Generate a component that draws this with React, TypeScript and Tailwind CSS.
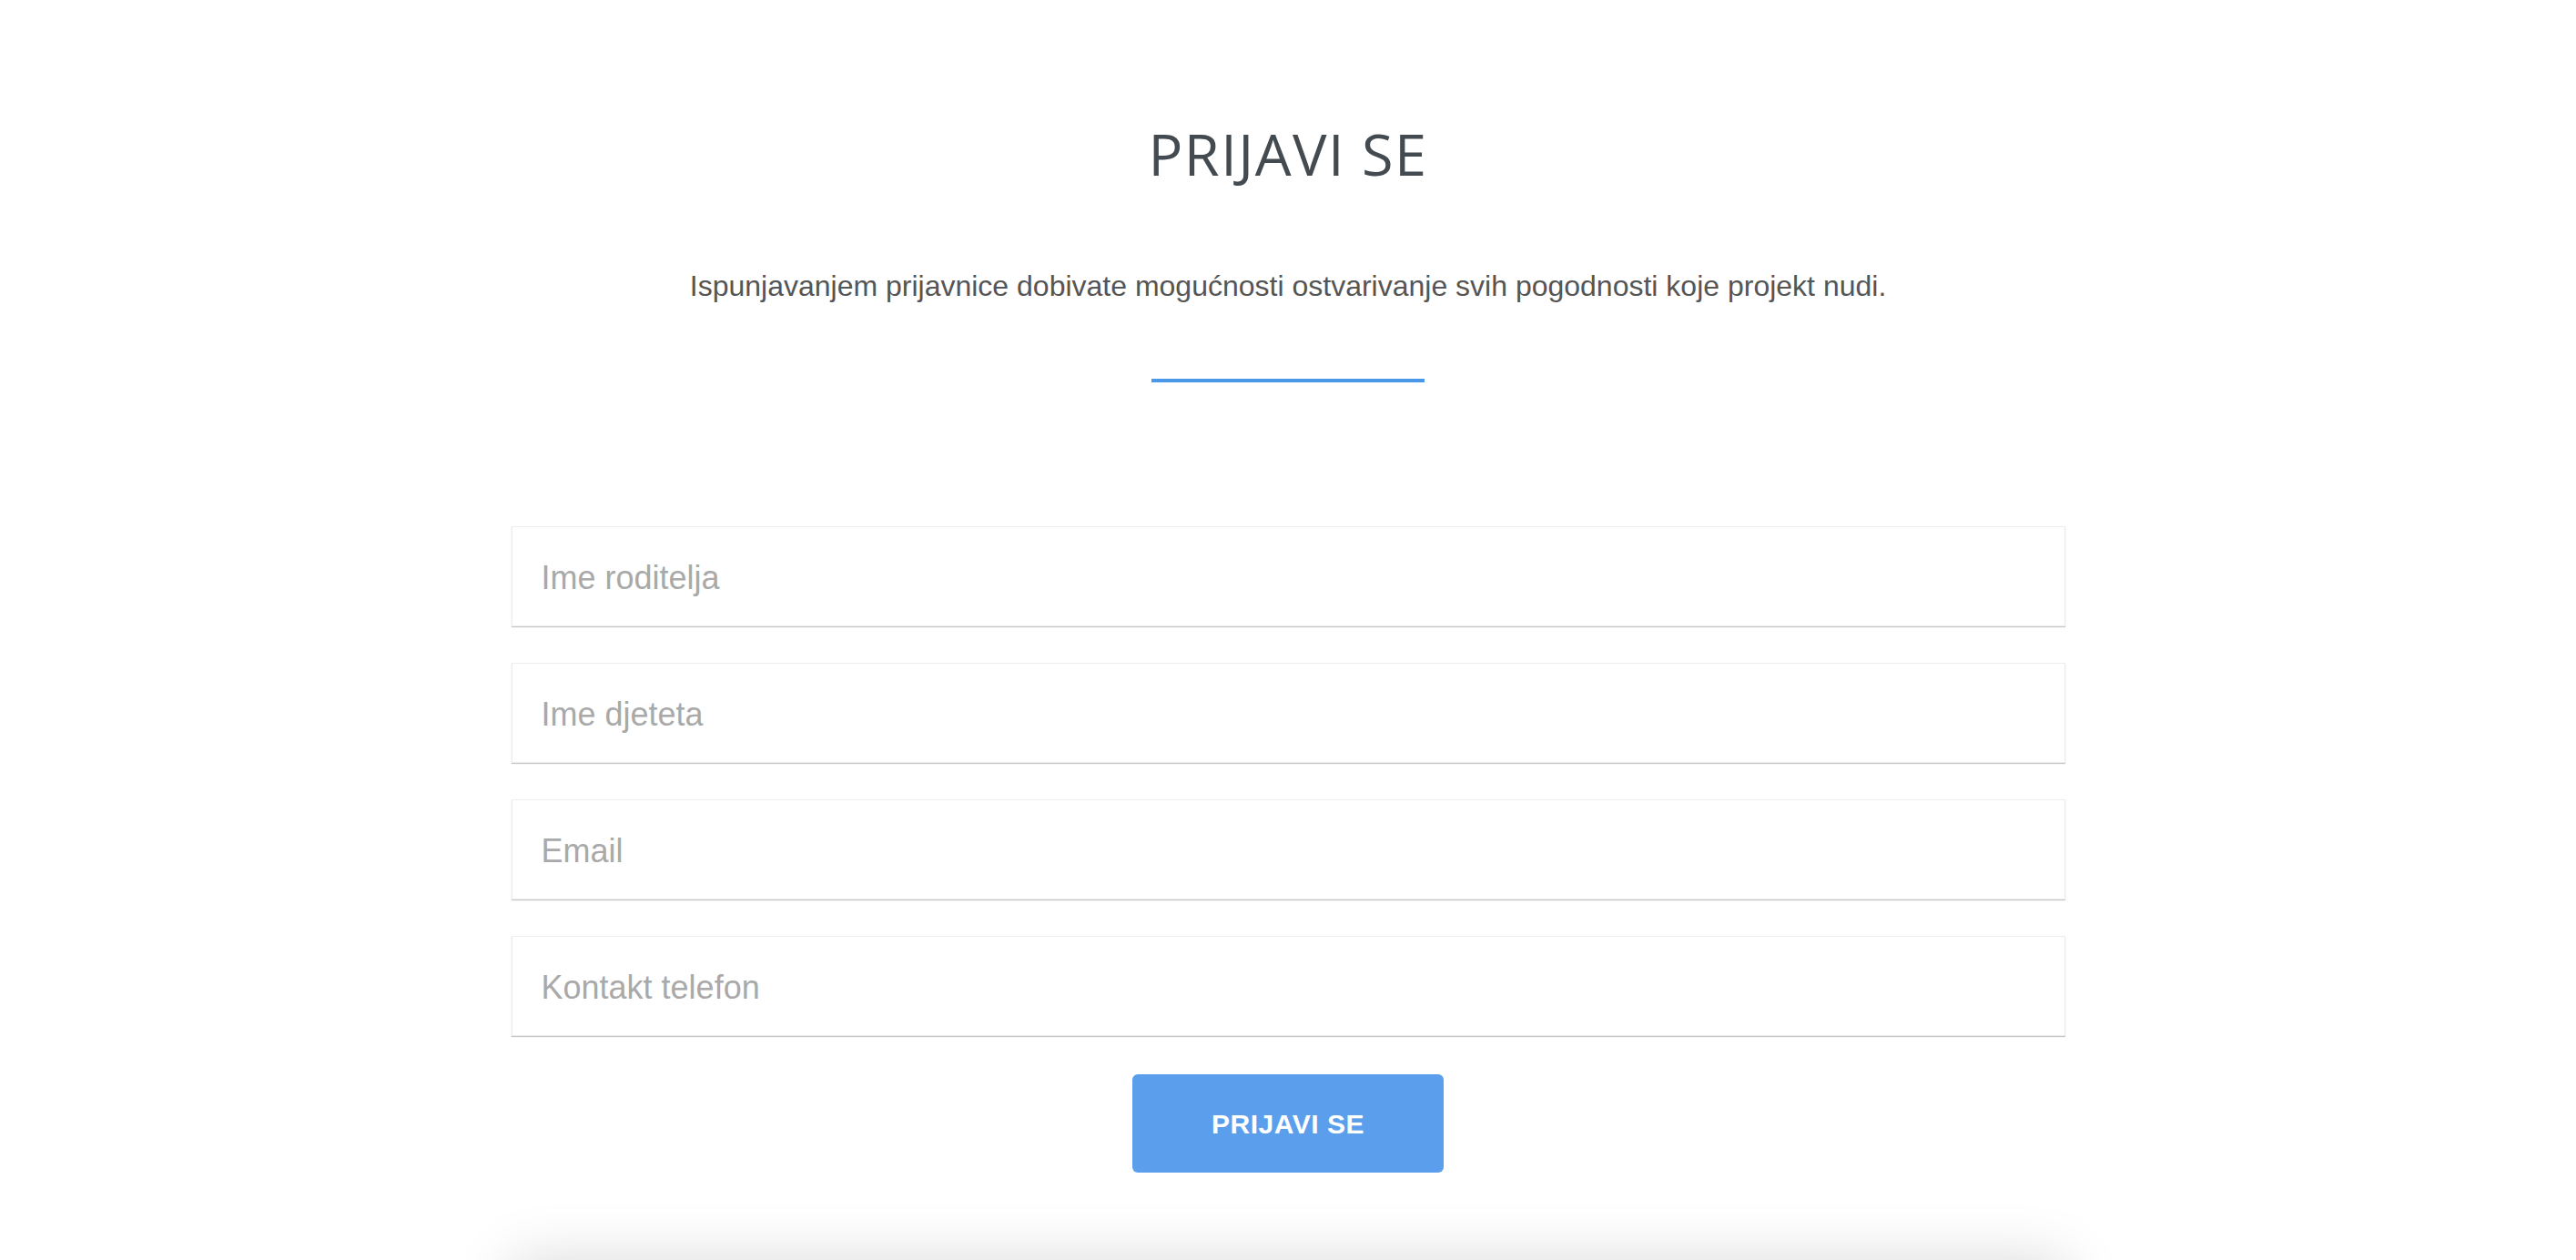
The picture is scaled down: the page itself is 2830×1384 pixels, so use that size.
import { useState } from 'react'

const fields = [
  { name: 'parent', placeholder: 'Ime roditelja', type: 'text' },
  { name: 'child', placeholder: 'Ime djeteta', type: 'text' },
  { name: 'email', placeholder: 'Email', type: 'email' },
  { name: 'phone', placeholder: 'Kontakt telefon', type: 'tel' },
]

export default function App() {
  const [values, setValues] = useState<Record<string, string>>({})

  return (
    <div className="min-h-screen overflow-hidden bg-white font-['Liberation_Sans',Arial,sans-serif]">
      <section className="mx-auto flex w-[1707px] flex-col items-center pt-[137px]">
        <h1 className="font-['Open_Sans',sans-serif] text-[63px] font-normal leading-none tracking-[1.5px] text-[#444b50]">PRIJAVI SE</h1>
        <p className="mt-[98px] text-[32px] leading-[32px] text-[#555555]">Ispunjavanjem prijavnice dobivate mogućnosti ostvarivanje svih pogodnosti koje projekt nudi.</p>
        <div className="mt-[86px] h-[4px] w-[300px] bg-[#4a98e8]" />

        <form className="mt-[158px] flex w-full flex-col items-center gap-[40px]" onSubmit={(e) => e.preventDefault()}>
          {fields.map((field) => (
            <input
              key={field.name}
              type={field.type}
              name={field.name}
              placeholder={field.placeholder}
              value={values[field.name] ?? ''}
              onChange={(e) => setValues((current) => ({ ...current, [field.name]: e.target.value }))}
              className="h-[110px] w-full border border-[#ededed] bg-white px-[32px] pt-[3px] text-[36px] text-[#333] shadow-[0_1px_1px_rgba(0,0,0,0.22)] outline-none placeholder:text-[#a9a9a9]"
            />
          ))}
          <button type="submit" className="mt-[2px] h-[108px] w-[342px] rounded-[6px] bg-[#5b9eec] text-[30px] font-bold tracking-[0.5px] text-white hover:bg-[#4a90e2]">PRIJAVI SE</button>
        </form>

        <div className="mt-[96px] h-[300px] w-full bg-white shadow-[0_0_60px_rgba(0,0,0,0.15)]" />
      </section>
    </div>
  )
}
